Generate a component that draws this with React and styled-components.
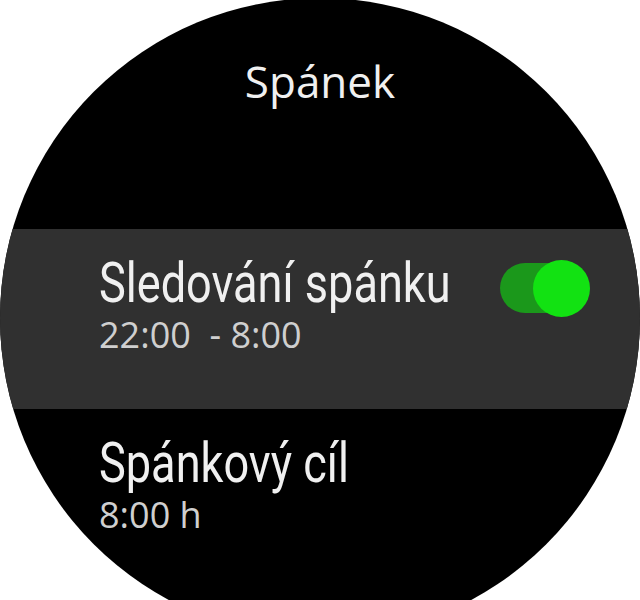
import React from 'react';
import styled, { createGlobalStyle } from 'styled-components';

const GlobalStyle = createGlobalStyle`
  html, body {
    margin: 0;
    padding: 0;
    background: #ffffff;
    height: 600px;
    overflow: hidden;
  }
`;

const Screen = styled.div`
  width: 640px;
  height: 640px;
  margin-top: -2px;
  border-radius: 50%;
  background: #000;
  overflow: hidden;
  display: flex;
  flex-direction: column;
`;

const Header = styled.div`
  height: 231px;
  box-sizing: border-box;
  padding-top: 61px;
  text-align: center;
`;

const Title = styled.h1`
  margin: 0;
  font-family: 'Open Sans', sans-serif;
  font-weight: 400;
  font-size: 44px;
  line-height: 44px;
  color: #f0f0f0;
`;

const Row = styled.div`
  height: 180px;
  flex-shrink: 0;
  box-sizing: border-box;
  padding: 27px 50px 0 99px;
  display: flex;
  align-items: flex-start;
  justify-content: space-between;
  background: ${(p) => (p.$active ? '#303030' : 'transparent')};
`;

const Texts = styled.div`
  flex: 1;
  min-width: 0;
  display: flex;
  flex-direction: column;
  gap: 6px;
`;

/* the watch font is a narrow one: squeeze Roboto to its width */
const Label = styled.div`
  font-family: Roboto, sans-serif;
  font-size: 55px;
  line-height: 55px;
  color: #f0f0f0;
  white-space: nowrap;
  transform: scaleX(0.82);
  transform-origin: left center;
`;

const Value = styled.div`
  font-family: 'Open Sans', sans-serif;
  font-size: 36px;
  line-height: 35px;
  color: #cfcfcf;
  white-space: pre;
`;

const Toggle = styled.div`
  position: relative;
  flex-shrink: 0;
  width: 90px;
  height: 57px;
  margin-top: 4px;
`;

const Track = styled.div`
  position: absolute;
  left: 0;
  top: 3px;
  width: 86px;
  height: 50px;
  border-radius: 25px;
  background: #1b981b;
`;

const Knob = styled.div`
  position: absolute;
  right: 0;
  top: 0;
  width: 57px;
  height: 57px;
  border-radius: 50%;
  background: #12e212;
`;

function Item({ label, value, active, toggle }) {
  return (
    <Row $active={active}>
      <Texts>
        <Label>{label}</Label>
        <Value>{value}</Value>
      </Texts>
      {toggle && (
        <Toggle>
          <Track />
          <Knob />
        </Toggle>
      )}
    </Row>
  );
}

export default function App() {
  return (
    <>
      <GlobalStyle />
      <Screen>
        <Header>
          <Title>Spánek</Title>
        </Header>
        <Item label="Sledování spánku" value="22:00  - 8:00" active toggle />
        <Item label="Spánkový cíl" value="8:00 h" />
      </Screen>
    </>
  );
}
